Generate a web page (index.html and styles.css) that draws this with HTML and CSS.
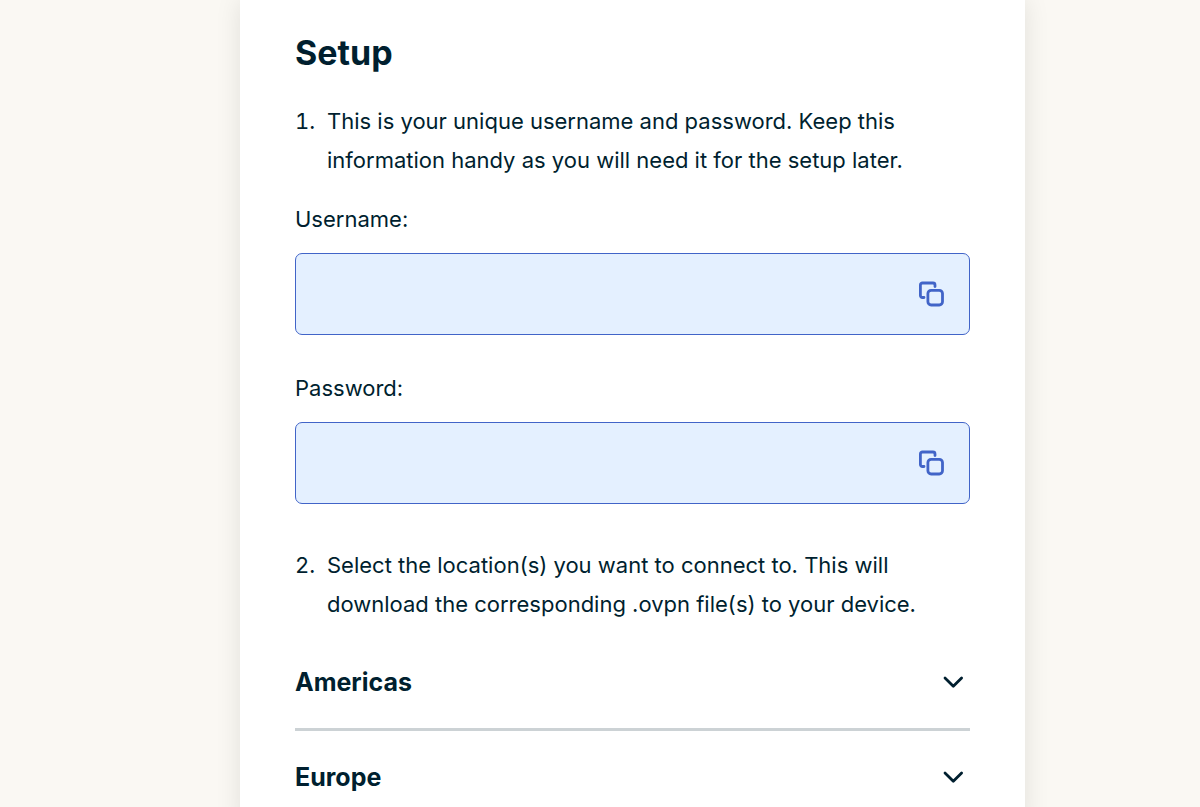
FILE: index.html
```html
<!DOCTYPE html>
<html lang="en">
<head>
<meta charset="utf-8">
<title>Setup</title>
<link rel="stylesheet" href="styles.css">
</head>
<body>
<main class="card">
  <h1 class="title">Setup</h1>
  <ol class="steps">
    <li class="step"><span class="number">1.</span><span>This is your unique username and password. Keep this information handy as you will need it for the setup later.</span></li>
  </ol>
  <div class="field">
    <label class="label" for="username">Username:</label>
    <div class="box">
      <input class="input" id="username" type="text" readonly>
      <button class="copy" type="button" aria-label="Copy username">
        <svg width="28" height="28" viewBox="0 0 28 28" fill="none" stroke="currentColor" stroke-width="2.8" stroke-linecap="round" stroke-linejoin="round"><rect x="9.900" y="10.400" width="14.600" height="14.600" rx="3.200"/><path d="M6 17.500H4.400a2 2 0 0 1-2-2V5a2 2 0 0 1 2-2H15a2 2 0 0 1 2 2v1.600"/></svg>
      </button>
    </div>
  </div>
  <div class="field">
    <label class="label" for="password">Password:</label>
    <div class="box">
      <input class="input" id="password" type="text" readonly>
      <button class="copy" type="button" aria-label="Copy password">
        <svg width="28" height="28" viewBox="0 0 28 28" fill="none" stroke="currentColor" stroke-width="2.8" stroke-linecap="round" stroke-linejoin="round"><rect x="9.900" y="10.400" width="14.600" height="14.600" rx="3.200"/><path d="M6 17.500H4.400a2 2 0 0 1-2-2V5a2 2 0 0 1 2-2H15a2 2 0 0 1 2 2v1.600"/></svg>
      </button>
    </div>
  </div>
  <ol class="steps steps-download" start="2">
    <li class="step"><span class="number">2.</span><span>Select the location(s) you want to connect to. This will download the corresponding .ovpn file(s) to your device.</span></li>
  </ol>
  <div class="regions">
    <button class="region" type="button">Americas
      <svg width="22" height="14" viewBox="0 0 22 14" fill="none" stroke="currentColor" stroke-width="2.8" stroke-linecap="round" stroke-linejoin="round"><path d="M3 3l8.300 8.300 8.300-8.300"/></svg>
    </button>
    <button class="region" type="button">Europe
      <svg width="22" height="14" viewBox="0 0 22 14" fill="none" stroke="currentColor" stroke-width="2.8" stroke-linecap="round" stroke-linejoin="round"><path d="M3 3l8.300 8.300 8.300-8.300"/></svg>
    </button>
  </div>
</main>
</body>
</html>
```
FILE: styles.css
```css
* {
  box-sizing: border-box;
}

body {
  margin: 0;
  padding: 0 175px 0 240px;
  overflow: hidden;
  background: #faf8f3;
  color: #001f2f;
  font: 22px/39px Inter, sans-serif;
}

.card {
  padding: 33px 55px 0;
  background: #fff;
  box-shadow: 0 0 24px rgba(0, 0, 0, 0.1);
}

.title {
  margin: 0 0 29px;
  font-size: 34px;
  line-height: 40px;
  font-weight: 700;
}

.steps {
  margin: 0;
  padding: 0;
  list-style: none;
}

.steps-download {
  margin-top: 42px;
}

.step {
  display: flex;
}

.number {
  flex: 0 0 32px;
  font-variant-numeric: tabular-nums;
}

.field {
  margin: 20px 0 0;
}

.field + .field {
  margin-top: 34px;
}

.label {
  display: block;
  margin-bottom: 14px;
}

.box {
  display: flex;
  align-items: center;
  height: 82px;
  padding: 0 23px;
  border: 1px solid #4164c8;
  border-radius: 7px;
  background: #e4f0ff;
}

.input {
  flex: 1;
  min-width: 0;
  border: 0;
  outline: 0;
  background: transparent;
  color: inherit;
  font: inherit;
}

.copy {
  display: flex;
  padding: 0;
  border: 0;
  background: none;
  color: #4164c8;
}

.regions {
  margin-top: 12px;
}

.region {
  display: flex;
  align-items: center;
  justify-content: space-between;
  width: 100%;
  height: 95px;
  padding: 0 6px 0 0;
  border: 0;
  border-bottom: 3px solid #ccd2d5;
  background: none;
  color: inherit;
  font: 700 25px/40px Inter, sans-serif;
}
```
